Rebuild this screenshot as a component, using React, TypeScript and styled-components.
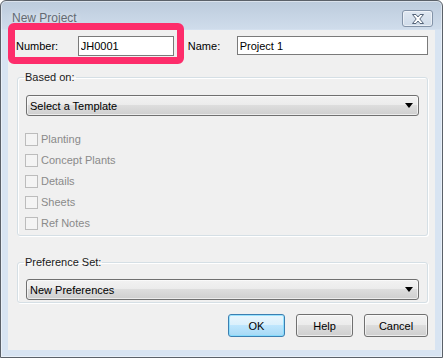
import React from 'react'
import styled, { createGlobalStyle } from 'styled-components'

const GlobalStyle = createGlobalStyle`
  html, body {
    margin: 0;
    padding: 0;
    background: #ffffff;
  }
  body {
    font-family: "Liberation Sans", Arial, sans-serif;
    font-size: 11px;
    color: #000;
  }
`

const checks = ['Planting', 'Concept Plants', 'Details', 'Sheets', 'Ref Notes']

const App = () => {
  return (
    <>
      <GlobalStyle />
      <Window>
        <TitleBar>
          <Title>New Project</Title>
          <CloseButton>
            <svg width="12" height="10" viewBox="0 0 12 10">
              <path
                d="M0.5 0.5 H4 L6 3 L8 0.5 H11.5 L7.8 5 L11.5 9.5 H8 L6 7 L4 9.5 H0.5 L4.2 5 Z"
                fill="#ffffff"
                stroke="#56657a"
                strokeWidth="1"
                strokeLinejoin="round"
              />
            </svg>
          </CloseButton>
        </TitleBar>
        <Client>
          <FieldRow>
            <Label width={62}>Number:</Label>
            <TextInput width={96} height={20} defaultValue="JH0001" />
            <Label width={49} style={{ marginLeft: 14 }}>Name:</Label>
            <TextInput width={192} height={19} defaultValue="Project 1" />
          </FieldRow>

          <Group>
            <Caption>Based on:</Caption>
            <Dropdown>
              <span>Select a Template</span>
              <Arrow />
            </Dropdown>
            <CheckList>
              {checks.map(c => (
                <CheckRow key={c}>
                  <CheckBox />
                  <CheckLabel>{c}</CheckLabel>
                </CheckRow>
              ))}
            </CheckList>
          </Group>

          <Group small>
            <Caption>Preference Set:</Caption>
            <Dropdown>
              <span>New Preferences</span>
              <Arrow />
            </Dropdown>
          </Group>

          <Buttons>
            <Button width={57} primary>OK</Button>
            <Button width={57}>Help</Button>
            <Button width={64}>Cancel</Button>
          </Buttons>
        </Client>
        <Highlight />
      </Window>
    </>
  )
}

export default App

const Arrow = () => (
  <svg width="8" height="5" viewBox="0 0 8 5">
    <path d="M0 0 H8 L4 5 Z" fill="#000" />
  </svg>
)

const Window = styled.div`
  position: relative;
  box-sizing: border-box;
  width: 443px;
  height: 358px;
  display: flex;
  flex-direction: column;
  border: 1px solid #5b6169;
  border-radius: 6px 6px 0 0;
  background: linear-gradient(#bccbdc 0px, #cfdceb 28px, #d8e4f2 29px, #d8e4f2 100%);
  box-shadow: inset 0 0 0 1px rgba(255, 255, 255, 0.45);
  overflow: hidden;
`
const TitleBar = styled.div`
  display: flex;
  justify-content: space-between;
  align-items: flex-start;
  height: 29px;
  box-sizing: border-box;
  padding: 9px 9px 0 11px;
`
const Title = styled.div`
  font-family: "Liberation Sans", Arial, sans-serif;
  font-size: 12px;
  line-height: 14px;
  margin-top: 1px;
  color: #646a72;
  text-shadow: 0 0 6px rgba(255, 255, 255, 0.8);
`
const CloseButton = styled.div`
  display: flex;
  justify-content: center;
  align-items: center;
  width: 31px;
  height: 17px;
  box-sizing: border-box;
  border: 1px solid #8393a8;
  border-radius: 3px;
  background: linear-gradient(#e0e8f2, #cfdbe9);
  box-shadow: inset 0 0 0 1px rgba(255, 255, 255, 0.5);
`
const Client = styled.div`
  flex: 1;
  margin: 0 7px 7px 7px;
  background: #f0f0f0;
  display: flex;
  flex-direction: column;
  padding: 6px 7px 0 9px;
`
const FieldRow = styled.div`
  display: flex;
  align-items: flex-start;
  margin-left: -1px;
  height: 20px;
`
const Label = styled.div<{ width: number }>`
  width: ${p => p.width}px;
  line-height: 20px;
  font-size: 11px;
  color: #000;
`
const TextInput = styled.input<{ width: number; height: number }>`
  box-sizing: border-box;
  width: ${p => p.width}px;
  height: ${p => p.height}px;
  border: 1px solid #7a7a7a;
  background: #fff;
  padding: 0 2px;
  margin: 0;
  font-family: "Liberation Sans", Arial, sans-serif;
  font-size: 11px;
  color: #000;
  outline: none;
`
const Group = styled.fieldset<{ small?: boolean }>`
  margin: ${p => (p.small ? '20px' : '15px')} 0 0 0;
  padding: ${p => (p.small ? '10px 8px 2px 8px' : '11px 8px 5px 8px')};
  border: 1px solid #d5dfe5;
  border-radius: 3px;
  box-shadow: inset 1px 1px 0 #ffffff, 1px 1px 0 #ffffff;
  min-width: 0;
`
const Caption = styled.legend`
  padding: 0 1px;
  margin-left: -2px;
  font-size: 11px;
  line-height: 13px;
  color: #1a1a1a;
`
const Dropdown = styled.div`
  display: flex;
  justify-content: space-between;
  align-items: center;
  box-sizing: border-box;
  height: 21px;
  padding: 0 5px 0 3px;
  border: 1px solid #707070;
  border-radius: 3px;
  background: linear-gradient(#f2f2f2 0%, #ebebeb 50%, #dddddd 50%, #cfcfcf 100%);
  box-shadow: inset 0 0 0 1px rgba(255, 255, 255, 0.6);
  font-size: 11px;
  color: #000;
`
const CheckList = styled.div`
  display: flex;
  flex-direction: column;
  gap: 8px;
  margin-top: 17px;
  margin-left: -1px;
`
const CheckRow = styled.div`
  display: flex;
  align-items: center;
  height: 13px;
  gap: 3px;
`
const CheckBox = styled.div`
  box-sizing: border-box;
  width: 13px;
  height: 13px;
  border: 1px solid #bcbcbc;
  background: #f4f4f4;
`
const CheckLabel = styled.span`
  font-size: 11px;
  line-height: 13px;
  color: #8a8a8a;
`
const Buttons = styled.div`
  display: flex;
  justify-content: flex-end;
  gap: 11px;
  margin-top: 11px;
`
const Button = styled.div<{ width: number; primary?: boolean }>`
  display: flex;
  justify-content: center;
  align-items: center;
  box-sizing: border-box;
  width: ${p => p.width}px;
  height: 23px;
  border: 1px solid ${p => (p.primary ? '#3c7fb1' : '#707070')};
  border-radius: 3px;
  background: ${p =>
    p.primary
      ? 'linear-gradient(#eaf6fd 0%, #d9f0fc 50%, #bee6fd 50%, #a7d9f5 100%)'
      : 'linear-gradient(#f2f2f2 0%, #ebebeb 50%, #dddddd 50%, #cfcfcf 100%)'};
  box-shadow: inset 0 0 0 1px ${p => (p.primary ? 'rgba(120, 220, 255, 0.7)' : 'rgba(255, 255, 255, 0.6)')};
  font-size: 11px;
  color: #000;
`
const Highlight = styled.div`
  position: absolute;
  left: 7px;
  top: 22px;
  width: 176px;
  height: 41px;
  box-sizing: border-box;
  border: 7px solid #fd2d6b;
  border-radius: 6px;
  pointer-events: none;
`
